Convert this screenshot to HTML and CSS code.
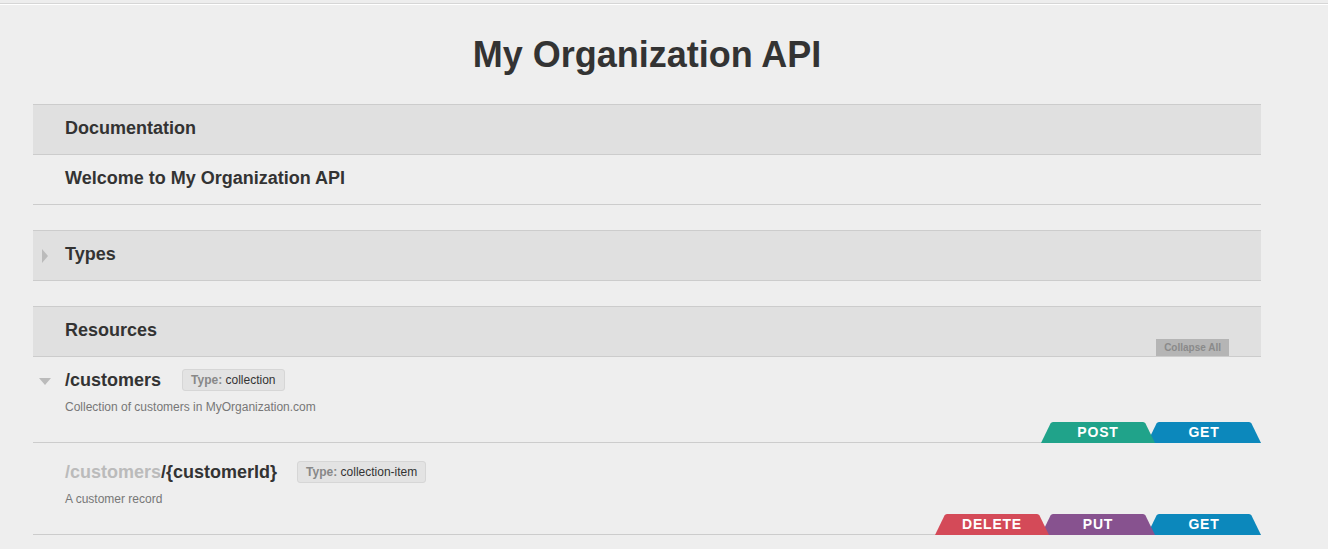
FILE: index.html
```html
<!DOCTYPE html>
<html lang="en">
<head>
<meta charset="utf-8">
<title>My Organization API</title>
<link rel="stylesheet" href="styles.css">
</head>
<body>
<div class="topline"></div>
<main class="console">
  <h1 class="api-title">My Organization API</h1>

  <section class="panel">
    <header class="panel-head">
      <span class="caret-slot"></span>
      <h2 class="panel-title">Documentation</h2>
    </header>
    <div class="doc-row">
      <span class="caret-slot"></span>
      <h3 class="doc-title">Welcome to My Organization API</h3>
    </div>
  </section>

  <section class="panel">
    <header class="panel-head">
      <span class="caret-slot"><span class="caret-right"></span></span>
      <h2 class="panel-title">Types</h2>
    </header>
  </section>

  <section class="panel">
    <header class="panel-head">
      <span class="caret-slot"></span>
      <h2 class="panel-title">Resources</h2>
      <button class="collapse-btn">Collapse All</button>
    </header>

    <div class="resource">
      <div class="resource-head">
        <span class="caret-slot"><span class="caret-down"></span></span>
        <h3 class="resource-title">/customers</h3>
        <span class="type-badge"><b>Type:</b> collection</span>
      </div>
      <p class="resource-desc">Collection of customers in MyOrganization.com</p>
      <div class="methods">
        <span class="tab tab-post">POST</span>
        <span class="tab tab-get">GET</span>
      </div>
    </div>

    <div class="resource resource-nested">
      <div class="resource-head">
        <span class="caret-slot"></span>
        <h3 class="resource-title"><span class="parent-path">/customers</span>/{customerId}</h3>
        <span class="type-badge"><b>Type:</b> collection-item</span>
      </div>
      <p class="resource-desc">A customer record</p>
      <div class="methods">
        <span class="tab tab-delete">DELETE</span>
        <span class="tab tab-put">PUT</span>
        <span class="tab tab-get">GET</span>
      </div>
    </div>
  </section>
</main>
</body>
</html>
```

FILE: styles.css
```css
* { box-sizing: border-box; }

html, body {
  margin: 0;
  padding: 0;
  background: #eeeeee;
  font-family: "Liberation Sans", Arial, sans-serif;
  color: #333333;
}

.topline {
  height: 5px;
  border-top: 3px solid #ededed;
  border-bottom: 1px solid #ffffff;
  background: #d6d6d6;
}

.console {
  width: 1228px;
  margin: 0 0 0 33px;
}

.api-title {
  margin: 29px 0 29px;
  font-size: 36px;
  line-height: 41px;
  font-weight: bold;
  text-align: center;
  color: #333333;
}

.panel {
  margin-bottom: 25px;
}

.panel-head {
  display: flex;
  align-items: center;
  background: #e0e0e0;
  border-top: 1px solid #cccccc;
  border-bottom: 1px solid #cccccc;
}

.caret-slot {
  flex: none;
  width: 24px;
  margin-right: 8px;
  display: flex;
  align-items: center;
  justify-content: center;
}

.panel-title,
.doc-title {
  margin: 0;
  padding: 13px 0 16px;
  font-size: 18px;
  line-height: 20px;
  font-weight: bold;
  color: #333333;
}

.doc-row {
  display: flex;
  align-items: center;
  border-bottom: 1px solid #cccccc;
}

.caret-right {
  width: 0;
  height: 0;
  border-top: 7px solid transparent;
  border-bottom: 7px solid transparent;
  border-left: 6px solid #bbbbbb;
}

.caret-down {
  width: 0;
  height: 0;
  border-left: 6.5px solid transparent;
  border-right: 6.5px solid transparent;
  border-top: 7px solid #bbbbbb;
  margin-top: 3px;
}

.collapse-btn {
  align-self: flex-end;
  margin-left: auto;
  margin-right: 32px;
  height: 17px;
  padding: 0 8px;
  border: 0;
  background: #b5b5b5;
  color: #8a8a8a;
  font-family: "Liberation Sans", Arial, sans-serif;
  font-size: 10px;
  font-weight: bold;
  line-height: 17px;
}

.resource {
  padding-top: 12px;
  border-bottom: 1px solid #cccccc;
}

.resource-nested {
  padding-top: 18px;
}

.resource-head {
  display: flex;
  align-items: center;
  height: 22px;
}

.resource-title {
  margin: 0;
  font-size: 18px;
  line-height: 22px;
  font-weight: bold;
  color: #333333;
}

.parent-path {
  color: #bbbbbb;
}

.type-badge {
  margin-left: 21px;
  height: 22px;
  padding: 0 8px;
  border: 1px solid #d6d6d6;
  border-radius: 3px;
  background: #e3e3e3;
  font-size: 12px;
  line-height: 20px;
  color: #333333;
}

.resource-nested .type-badge {
  margin-left: 20px;
}

.type-badge b {
  color: #888888;
}

.resource-desc {
  margin: 8px 0 0 32px;
  font-size: 12px;
  line-height: 16px;
  color: #777777;
}

.methods {
  display: flex;
  justify-content: flex-end;
  margin-top: 7px;
  margin-bottom: -1px;
}

.tab {
  position: relative;
  width: 114px;
  height: 21px;
  margin-left: -8px;
  color: #ffffff;
  font-size: 14px;
  font-weight: bold;
  letter-spacing: 0.8px;
  line-height: 21px;
  text-align: center;
  clip-path: path('M0 21 L9.5 1.5 Q10.3 0 12 0 L102 0 Q103.7 0 104.5 1.5 L114 21 Z');
}

.tab:nth-child(1) { margin-left: 0; z-index: 3; }
.tab:nth-child(2) { z-index: 2; }
.tab:nth-child(3) { z-index: 1; }

.tab-post { background: #20a38a; }
.tab-get { background: #0c88bc; }
.tab-delete { background: #d44a58; }
.tab-put { background: #87528f; }
```
